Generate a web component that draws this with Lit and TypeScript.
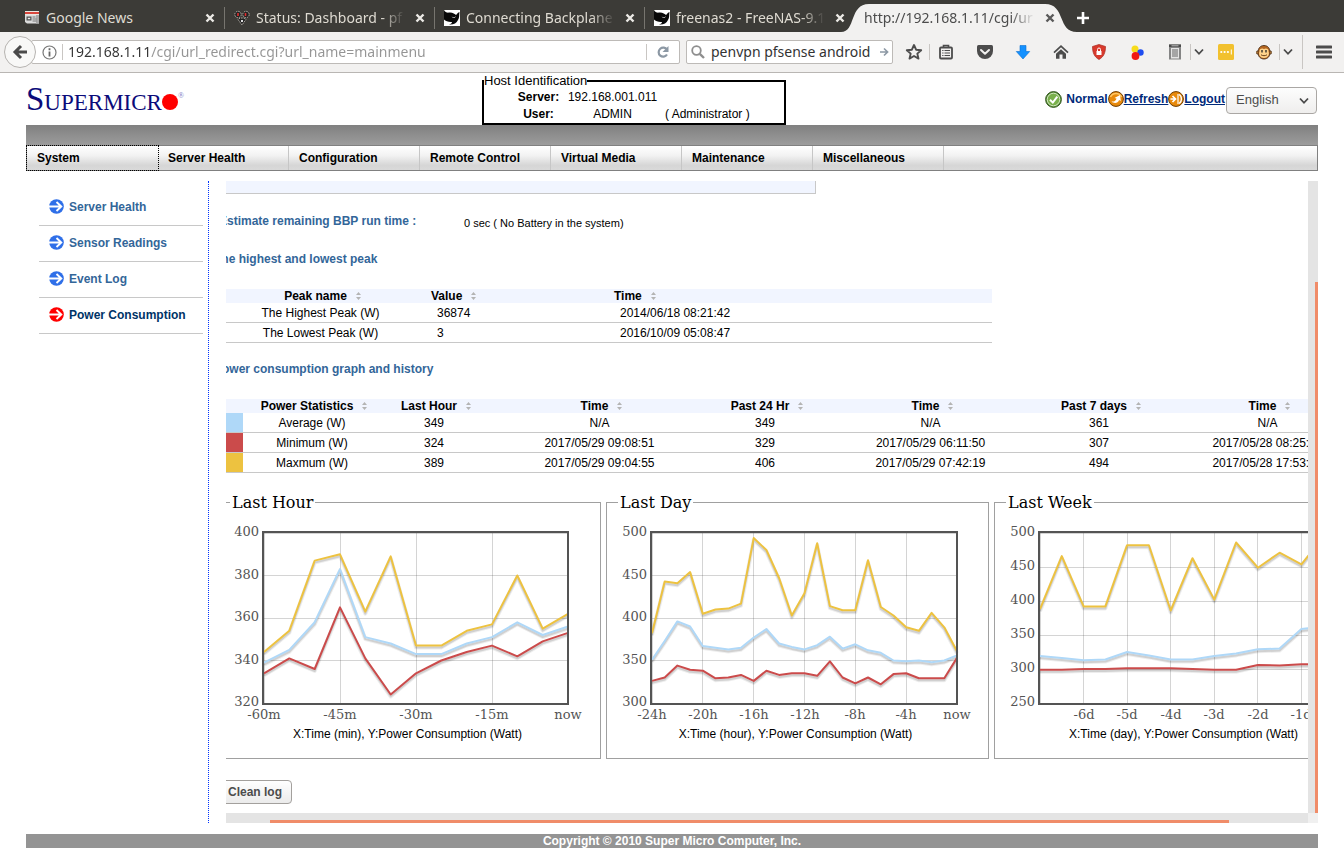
import { LitElement, html, svg, css } from "lit";
import { customElement, property, query } from "lit/decorators.js";
import { classMap } from "lit/directives/class-map.js";

const chevron = html`<svg class="icon" width="10" height="8" viewBox="0 0 10 8" aria-hidden="true">
  <path d="M1 1.500 5 5.800 9 1.500" fill="none" stroke="#4a4a4a" stroke-width="1.800" />
</svg>`;

const closeIcon = (color: string) => html`<svg class="icon" width="10" height="10" viewBox="0 0 10 10" aria-hidden="true">
  <path d="M1.5 1.5 8.5 8.5M8.5 1.5 1.5 8.5" fill="none" stroke=${color} stroke-width="2.4" />
</svg>`;

const newsIcon = html`<svg class="icon" width="16" height="16" viewBox="0 0 16 16" aria-hidden="true">
  <path d="M1 1h14v4H1z" fill="#e8e6e2" />
  <path d="M1 2h14v2H1z" fill="#d8463c" />
  <path d="M1 5h14v8.500H3L1 12z" fill="#dcdcdc" />
  <path d="M12 5h3v8.500h-3z" fill="#a9a9a9" />
  <path d="M2.500 6.500h5v4h-5z" fill="#555" />
  <path d="M3.800 7.800h2.400v1.400H3.800z" fill="#eee" />
  <path d="M8.500 7h3M8.500 9h4M8.500 11h4" stroke="#777" />
</svg>`;

const pfIcon = html`<svg class="icon" width="16" height="16" viewBox="0 0 16 16" aria-hidden="true">
  <circle cx="4" cy="4.5" r="3.2" fill="#222" stroke="#b9b4ac" stroke-dasharray="1.5 1" />
  <circle cx="12" cy="4.5" r="3.2" fill="#222" stroke="#b9b4ac" stroke-dasharray="1.5 1" />
  <path d="M4 9.5 8 15l4-5.5-2-1.5H6z" fill="#222" stroke="#b9b4ac" stroke-dasharray="1.5 1" />
  <path d="M4 3v3M11.5 3v3" stroke="#e03030" stroke-width="1.6" />
  <path d="M7 10h2v2H7z" fill="#ddd" />
</svg>`;

const orcaIcon = html`<svg class="icon" width="16" height="16" viewBox="0 0 16 16" aria-hidden="true">
  <path d="M0 0h16v16H0z" fill="#fff" />
  <path d="M0 0c1 2 3 3 5 2.6C8 2 11 4 12 5c1-1 2-2.500 3.500-3C15 5 15.500 8 14 10c-1.500 3.500-5 5-9 4.500C7 14 8 13 8 12 5 12.500 1.500 11 0 9.500z" fill="#080808" />
  <path d="M7.500 6.500c1.500 1 3 1 4.500-.3-.5 1.600-3 2.300-4.500.3z" fill="#fff" />
</svg>`;

const toolIcons = {
  star: html`<svg class="icon" width="18" height="18" viewBox="0 0 18 18"><path d="M9 2l2.100 4.700 5.100.5-3.900 3.400 1.200 5L9 13l-4.500 2.600 1.200-5L1.800 7.200l5.100-.5z" fill="none" stroke="#4c4c4c" stroke-width="1.900" stroke-linejoin="round" /></svg>`,
  list: html`<svg class="icon" width="16" height="16" viewBox="0 0 16 16"><path d="M5.500 3V1.500h5V3" fill="none" stroke="#4c4c4c" stroke-width="1.600" /><rect x="2" y="3.500" width="12" height="11" rx="1" fill="none" stroke="#4c4c4c" stroke-width="1.800" /><path d="M4.200 6.500h1.300M6.500 6.500H12M4.200 9h1.300M6.500 9H12M4.200 11.500h1.300M6.500 11.500H12" stroke="#4c4c4c" stroke-width="1.100" /></svg>`,
  pocket: html`<svg class="icon" width="18" height="16" viewBox="0 0 18 16"><path d="M1 2.500Q1 1 2.500 1h13Q17 1 17 2.500V7a8 8 0 0 1-16 0z" fill="#4c4c4c" /><path d="M5 6l4 3.800L13 6" fill="none" stroke="#f2f1f0" stroke-width="2" stroke-linecap="round" stroke-linejoin="round" /></svg>`,
  download: html`<svg class="icon" width="16" height="16" viewBox="0 0 16 16"><path d="M5 1.500h6v6h3.700L8 15 1.300 7.500H5z" fill="#1491ff" stroke="#0a6fd0" stroke-width=".6" /></svg>`,
  home: html`<svg class="icon" width="16" height="16" viewBox="0 0 16 16"><path d="M1 8.700 8 2.200l7 6.500" fill="none" stroke="#4c4c4c" stroke-width="1.700" /><path d="M3 9.800l5-4.600 5 4.600v5H9.500V10.500h-3v4.300H3z" fill="#4c4c4c" /></svg>`,
  shield: html`<svg class="icon" width="16" height="16" viewBox="0 0 16 16"><path d="M8 .5 14.500 2.500C14.500 9 12.500 13 8 15.500 3.500 13 1.500 9 1.500 2.500z" fill="#d93a2d" stroke="#a82a20" stroke-width=".7" /><path d="M5.500 7h5v4h-5z" fill="#fff" /><path d="M6.500 7V5.500a1.500 1.500 0 0 1 3 0V7" fill="none" stroke="#fff" /></svg>`,
  dots: html`<svg class="icon" width="16" height="16" viewBox="0 0 16 16"><circle cx="6" cy="5" r="3.500" fill="#f7dc1b" /><circle cx="11.500" cy="8.500" r="3.200" fill="#1f4df0" /><circle cx="6.500" cy="12" r="3.900" fill="#f01a12" /></svg>`,
  clip: html`<svg class="icon" width="14" height="16" viewBox="0 0 14 16"><path d="M1 .500h12V15.500H1z" fill="#858585" /><path d="M3 4h8v10.500H3z" fill="#e4e4e4" /><path d="M1 .500h12V3H1z" fill="#4a4a4a" /><path d="M3.500 1.800h7" stroke="#ddd" stroke-width=".8" /><path d="M4 6h6M4 8h6M4 10h6M4 12h6" stroke="#666" /></svg>`,
  pass: html`<svg class="icon" width="16" height="16" viewBox="0 0 16 16"><rect width="16" height="16" rx="1.500" fill="#f2c12e" /><circle cx="3.300" cy="8" r="1.100" fill="#fff" /><circle cx="6.600" cy="8" r="1.100" fill="#fff" /><circle cx="9.900" cy="8" r="1.100" fill="#fff" /><path d="M13.300 5.500v5" stroke="#fff" /></svg>`,
  monkey: html`<svg class="icon" width="16" height="16" viewBox="0 0 16 16"><circle cx="2" cy="8.500" r="1.700" fill="#e09a4c" stroke="#3b2410" stroke-width=".7" /><circle cx="14" cy="8.500" r="1.700" fill="#e09a4c" stroke="#3b2410" stroke-width=".7" /><path d="M8 1.500c4 0 6 3 6 7s-2.500 6.500-6 6.500-6-2.500-6-6.500 2-7 6-7z" fill="#b4651f" stroke="#3b2410" stroke-width=".8" /><path d="M8 5c2-1.500 5 0 4.500 2.500 1.500 3.500-1 6.500-4.500 6.500S2 11 3.500 7.500C3 5 6 3.500 8 5z" fill="#ffd48c" /><path d="M6 6v2.500M10 6v2.500" stroke="#222" stroke-width="1.300" /><path d="M5 10.800c2 1.200 4 1.200 6 0" fill="none" stroke="#5a3010" stroke-width=".9" /></svg>`,
  menu: html`<svg class="icon" width="16" height="14" viewBox="0 0 16 14"><path d="M1 2h14M1 7h14M1 12h14" stroke="#4c4c4c" stroke-width="3" stroke-linecap="round" /></svg>`,
};

@customElement("browser-chrome")
export class BrowserChrome extends LitElement {
  static styles = css`
    :host {
      display: block;
      font: 14px/20px "Noto Sans", "Open Sans", sans-serif;
      color: #4c4c4c;
    }
    .icon { display: block; flex: none; }
    button { font: inherit; color: inherit; background: none; border: 0; padding: 0; }
    .tabs {
      display: flex;
      height: 32px;
      box-sizing: border-box;
      padding: 4px 0 0 15px;
      background: #3c3b37;
      color: #dfdbd2;
    }
    .tab {
      flex: 0 1 210px;
      min-width: 0;
      box-sizing: border-box;
      display: flex;
      align-items: center;
      gap: 6px;
      padding: 0 10px 0 9px;
      position: relative;
    }
    .tab.split { background: linear-gradient(#77756f, #77756f) right 3px / 1px 22px no-repeat; }
    .tab.active { color: #4c4c4c; z-index: 1; }
    .shape { position: absolute; left: -14px; top: 0; width: calc(100% + 28px); height: 28px; }
    .title {
      flex: 1;
      min-width: 0;
      overflow: hidden;
      white-space: nowrap;
      position: relative;
    }
    .fade { mask-image: linear-gradient(90deg, #000 calc(100% - 28px), transparent calc(100% - 4px)); }
    .close { position: relative; }
    .new { padding: 0 11px; }
    .bar {
      display: flex;
      align-items: center;
      height: 40px;
      padding-left: 4px;
      background: #f2f1f0;
      border-bottom: 1px solid #b9b6b3;
    }
    .back {
      flex: none;
      width: 32px;
      height: 32px;
      box-sizing: border-box;
      border: 1px solid #b6b3b0;
      border-radius: 50%;
      background: #f8f8f7;
      display: grid;
      place-items: center;
      z-index: 1;
    }
    .field {
      display: flex;
      align-items: center;
      box-sizing: border-box;
      height: 24px;
      background: #fff;
      border: 1px solid #bdbab7;
      border-radius: 2px;
    }
    .address { flex: 1; min-width: 0; margin-left: -5px; padding-left: 10px; }
    .search { flex: 0 1 207px; min-width: 0; margin-left: 6px; padding: 0 3px 0 4px; }
    .field input {
      flex: 1;
      min-width: 0;
      width: 0;
      height: 20px;
      font: inherit;
      color: #333;
      border: 0;
      padding: 0;
      outline: 0;
      background: none;
    }
    .field .url {
      margin-left: 5px;
      -webkit-text-fill-color: transparent;
      background: linear-gradient(90deg, #333 83px, #959595 83px);
      -webkit-background-clip: text;
      background-clip: text;
    }
    .search input { margin-left: 6px; }
    .rule { flex: none; width: 1px; height: 16px; background: #c9c6c3; }
    .info { margin-right: 5px; }
    .reload { width: 32px; display: grid; place-items: center; }
    .tool { flex: none; width: 38px; height: 32px; display: grid; place-items: center; }
    .tool.narrow { width: 31px; }
    .tool.paired { width: 34px; padding-left: 4px; }
    .tool.drop { width: 16px; }
    .tool.last { width: 41px; }
    .gap { margin-left: 5px; }
    .tall { height: 34px; margin-left: 6px; }
  `;

  private tabs = [
    { title: "Google News", icon: newsIcon, split: true, fade: false },
    { title: "Status: Dashboard - pf", icon: pfIcon, split: true, fade: true },
    { title: "Connecting Backplane", icon: orcaIcon, split: true, fade: true },
    { title: "freenas2 - FreeNAS-9.1", icon: orcaIcon, split: false, fade: true },
  ];

  private tool(name: keyof typeof toolIcons, label: string, extra = "") {
    return html`<button class="tool ${extra}" aria-label=${label}>${toolIcons[name]}</button>`;
  }

  render() {
    return html`
      <div class="tabs">
        ${this.tabs.map(
          (t) => html`<div class=${classMap({ tab: true, split: t.split })}>
            ${t.icon}<span class=${classMap({ title: true, fade: t.fade })}>${t.title}</span>
            <button class="close" aria-label="Close tab">${closeIcon("#eceae6")}</button>
          </div>`,
        )}
        <div class="tab active">
          <svg class="shape" viewBox="0 0 238 28" preserveAspectRatio="none" aria-hidden="true">
            <path d="M0 28C15 28 8 0 28 0H204C225 0 216 28 236 28z" fill="#f2f1f0" />
          </svg>
          <span class="title fade">http://192.168.1.11/cgi/ur</span>
          <button class="close" aria-label="Close tab">${closeIcon("#5a5a5a")}</button>
        </div>
        <button class="new" aria-label="New tab">
          <svg class="icon" width="14" height="14" viewBox="0 0 14 14"><path d="M7 1v12M1 7h12" stroke="#fff" stroke-width="2.600" /></svg>
        </button>
      </div>
      <div class="bar">
        <button class="back" aria-label="Back">
          <svg class="icon" width="16" height="16" viewBox="0 0 16 16"><path d="M9 2 3 8l6 6M3 8h12" fill="none" stroke="#4a4a4a" stroke-width="3" /></svg>
        </button>
        <div class="field address">
          <svg class="icon info" width="15" height="15" viewBox="0 0 15 15" aria-hidden="true"><circle cx="7.500" cy="7.500" r="6.500" fill="none" stroke="#777" stroke-width="1.200" /><path d="M7.500 6.500v5M7.500 3.300v2" stroke="#666" stroke-width="1.800" /></svg>
          <span class="rule"></span>
          <input class="url" aria-label="Address" value="192.168.1.11/cgi/url_redirect.cgi?url_name=mainmenu" />
          <span class="rule"></span>
          <button class="reload" aria-label="Reload">
            <svg class="icon" width="14" height="14" viewBox="0 0 14 14"><path d="M11 4.800A4.500 4.500 0 1 0 11 9.500" fill="none" stroke="#8c98a4" stroke-width="2.200" /><path d="M12.500 1v6h-6z" fill="#8c98a4" /></svg>
          </button>
        </div>
        <div class="field search">
          <svg class="icon" width="14" height="14" viewBox="0 0 14 14" aria-hidden="true"><circle cx="5.500" cy="5.500" r="4.300" fill="none" stroke="#8e8e8e" stroke-width="1.800" /><path d="M8.800 8.800 13 13" stroke="#8e8e8e" stroke-width="2.400" /></svg>
          <input aria-label="Search" value="penvpn pfsense android" />
          <svg class="icon" width="9" height="10" viewBox="0 0 9 10" aria-hidden="true"><path d="M0 5h7.500M4 1.500 7.600 5 4 8.500" fill="none" stroke="#8c98a4" stroke-width="1.600" /></svg>
        </div>
        ${this.tool("star", "Bookmark", "narrow gap")}<span class="rule"></span>
        ${this.tool("list", "Bookmarks list", "narrow")}
        ${this.tool("pocket", "Pocket", "gap")}
        ${this.tool("download", "Downloads")}
        ${this.tool("home", "Home")}
        ${this.tool("shield", "Blocker")}
        ${this.tool("dots", "Colour dots")}
        ${this.tool("clip", "Clipboard", "paired")}<span class="rule"></span>
        <button class="tool drop" aria-label="Clipboard options">${chevron}</button>
        ${this.tool("pass", "Passwords")}
        ${this.tool("monkey", "Scripts", "paired")}<span class="rule"></span>
        <button class="tool drop" aria-label="Script options">${chevron}</button>
        <span class="rule tall"></span>
        ${this.tool("menu", "Menu", "last")}
      </div>
    `;
  }
}

type Series = { kind: string; values: number[] };

@customElement("power-chart")
export class PowerChart extends LitElement {
  static styles = css`
    :host { display: block; flex: none; width: 383px; }
    .frame {
      box-sizing: border-box;
      height: 266px;
      margin: 0;
      padding: 9px 12px 0 8px;
      border: 1px solid #a0a0a0;
      min-width: 0;
    }
    .legend { margin-left: 3px; padding: 0 2px; font: 16px/19px "DejaVu Serif", serif; color: #000; }
    .plot { display: block; overflow: visible; }
    .caption { margin: 1px 0 0; font: 12px/16px "Liberation Sans", Arial, sans-serif; text-align: center; }
    .tick { font: 13px "DejaVu Serif", serif; fill: #545454; }
    .end { text-anchor: end; }
    .middle { text-anchor: middle; }
    .grid { stroke: #545454; stroke-opacity: 0.25; }
    .box { fill: none; stroke: #545454; stroke-width: 2; }
    .line { fill: none; stroke-width: 2; stroke-linejoin: round; }
    .avg { stroke: #afd8f8; }
    .min { stroke: #cb4b4b; }
    .max { stroke: #edc240; }
    .shadow { fill: none; stroke: #000; stroke-opacity: 0.12; stroke-width: 2; stroke-linejoin: round; }
    .soft { stroke-opacity: 0.07; stroke-width: 4; }
  `;

  @property() heading = "";
  @property() caption = "";
  @property({ attribute: false }) low = 0;
  @property({ attribute: false }) high = 0;
  @property({ attribute: false }) step = 1;
  @property({ attribute: false }) right = 341;
  @property({ attribute: false }) labels: string[] = [];
  @property({ attribute: false }) series: Series[] = [];

  private x0 = 37;
  private y0 = 12;
  private y1 = 182;

  private y(v: number) {
    return this.y1 - ((v - this.low) / (this.high - this.low)) * (this.y1 - this.y0);
  }

  private points(values: number[], dy: number) {
    const dx = (this.right - this.x0) / (values.length - 1);
    return values.map((v, i) => `${(this.x0 + i * dx).toFixed(1)},${(this.y(v) + dy).toFixed(1)}`).join(" ");
  }

  render() {
    const rows: number[] = [];
    for (let v = this.low; v <= this.high; v += this.step) rows.push(v);
    const gap = (this.right - this.x0) / (this.labels.length - 1);
    const line = (v: number) => Math.floor(v) + 0.5;
    return html`<fieldset class="frame">
      <legend class="legend">${this.heading}</legend>
      <svg class="plot" width="361" height="204" viewBox="0 0 361 204" role="img" aria-label=${this.heading}>
        ${rows.map(
          (v) => svg`<line class="grid" x1=${this.x0} x2=${this.right} y1=${line(this.y(v))} y2=${line(this.y(v))} />
            <text class="tick end" x="32" y=${Math.round(this.y(v)) + 3}>${v}</text>`,
        )}
        ${this.labels.map((t, i) => {
          const x = this.x0 + i * gap;
          return svg`<line class="grid" x1=${line(x)} x2=${line(x)} y1=${this.y0} y2=${this.y1} />
            <text class="tick middle" x=${Math.round(x)} y="198">${t}</text>`;
        })}
        ${this.series.map(
          (s) => svg`<polyline class="shadow soft" points=${this.points(s.values, 2)} />
            <polyline class="shadow" points=${this.points(s.values, 2)} />
            <polyline class="line ${s.kind}" points=${this.points(s.values, 0)} />`,
        )}
        <rect class="box" x="36" y="11" width=${this.right - 36} height="172" />
      </svg>
      <p class="caption">${this.caption}</p>
    </fieldset>`;
  }
}

const sorter = html`<svg class="sort" width="5" height="8" viewBox="0 0 5 8" aria-hidden="true">
  <path d="M0 3h5L2.500 0zM0 5h5L2.500 8z" fill="#b4b4b4" />
</svg>`;

@customElement("power-report")
export class PowerReport extends LitElement {
  static styles = css`
    :host {
      flex: 1;
      min-width: 0;
      display: grid;
      grid-template: minmax(0, 1fr) 10px / minmax(0, 1fr) 10px;
      font: 12px/14px "Liberation Sans", Arial, sans-serif;
      color: #000;
    }
    .view { overflow: hidden; }
    .content { width: max-content; padding: 0 20px 0 42px; }
    .strip {
      width: 597px;
      height: 12px;
      background: #f1f5ff;
      border: solid #c8c8c8;
      border-width: 0 1px 1px 0;
    }
    .title { margin: 0; font-size: 12px; line-height: 14px; color: #336699; }
    .runtime { display: flex; align-items: center; height: 16px; margin-top: 20px; }
    .runtime .title { width: 245px; padding: 0 0 2px 1px; }
    .runtime .value { font-size: 11px; margin-top: 2px; }
    .section { margin-left: -4px; }
    .peaks-title { margin-top: 22px; }
    .history-title { margin-top: 19px; }
    .data { table-layout: fixed; border-collapse: collapse; margin-top: 23px; }
    .data th { height: 14px; padding: 0 0 0 4px; background: #f1f5ff; white-space: nowrap; }
    .data td { height: 19px; padding: 0; border-bottom: 1px solid #c8c8c8; text-align: center; white-space: nowrap; }
    .sort { margin-left: 9px; }
    .peaks { width: 774px; }
    .data .lead { text-align: left; padding-left: 8px; }
    .data .text { text-align: left; padding-left: 14px; }
    .stats { width: 1162px; }
    .c25 { width: 25px; }
    .c105 { width: 106px; }
    .c138 { width: 138px; }
    .c183 { width: 183px; }
    .c205 { width: 205px; }
    .c225 { width: 225px; }
    .c112 { width: 112px; }
    .avg { background: #afd8f8; }
    .min { background: #cb4b4b; }
    .max { background: #edc240; }
    .charts { display: flex; gap: 5px; margin-top: 20px; }
    .clean {
      display: block;
      height: 24px;
      margin-top: 21px;
      padding: 0 9px;
      font: bold 12px/14px "Liberation Sans", Arial, sans-serif;
      color: #4c4c4c;
      background: linear-gradient(#fff, #ebebeb);
      border: 1px solid #a3a09d;
      border-radius: 4px;
    }
    .track { background: #e4e4e4; display: flex; }
    .down { flex-direction: column; align-items: flex-end; }
    .across { align-items: flex-end; }
    .thumb { background: #f08c69; }
    .down .thumb { width: 3px; height: 84%; margin-top: auto; }
    .across .thumb { height: 3px; width: 88.6%; margin-left: 44px; }
    .corner { background: #f0f0f0; }
  `;

  @query(".view") view!: HTMLElement;

  firstUpdated() {
    this.view.scrollLeft = 50;
  }

  private stats = [
    ["avg", "Average (W)", "349", "N/A", "349", "N/A", "361", "N/A"],
    ["min", "Minimum (W)", "324", "2017/05/29 09:08:51", "329", "2017/05/29 06:11:50", "307", "2017/05/28 08:25:31"],
    ["max", "Maxmum (W)", "389", "2017/05/29 09:04:55", "406", "2017/05/29 07:42:19", "494", "2017/05/28 17:53:31"],
  ];

  private charts = [
    {
      heading: "Last Hour",
      caption: "X:Time (min), Y:Power Consumption (Watt)",
      low: 320, high: 400, step: 20, right: 341,
      labels: ["-60m", "-45m", "-30m", "-15m", "now"],
      series: [
        { kind: "avg", values: [339, 345, 358, 383, 351, 348, 343, 343, 348, 351, 358, 352, 356] },
        { kind: "min", values: [334, 341, 336, 365, 341, 324, 334, 340, 344, 347, 342, 349, 353] },
        { kind: "max", values: [344, 354, 387, 390, 363, 389, 347, 347, 354, 357, 380, 355, 362] },
      ],
    },
    {
      heading: "Last Day",
      caption: "X:Time (hour), Y:Power Consumption (Watt)",
      low: 300, high: 500, step: 50, right: 342,
      labels: ["-24h", "-20h", "-16h", "-12h", "-8h", "-4h", "now"],
      series: [
        { kind: "avg", values: [351, 373, 396, 390, 367, 365, 363, 365, 377, 387, 370, 366, 363, 368, 378, 364, 369, 362, 359, 350, 349, 350, 348, 350, 356] },
        { kind: "min", values: [326, 330, 344, 339, 338, 329, 330, 333, 326, 338, 333, 335, 335, 332, 349, 330, 323, 330, 322, 334, 335, 329, 329, 329, 353] },
        { kind: "max", values: [382, 443, 441, 454, 405, 410, 411, 417, 494, 480, 447, 403, 429, 488, 414, 409, 409, 468, 413, 403, 389, 385, 406, 389, 361] },
      ],
    },
    {
      heading: "Last Week",
      caption: "X:Time (day), Y:Power Consumption (Watt)",
      low: 250, high: 500, step: 50, right: 342,
      labels: ["", "-6d", "-5d", "-4d", "-3d", "-2d", "-1d", "now"],
      series: [
        { kind: "avg", values: [319, 316, 313, 314, 325, 320, 314, 314, 319, 323, 329, 330, 359, 362, 356] },
        { kind: "min", values: [299, 299, 300, 300, 301, 301, 301, 300, 299, 299, 306, 305, 307, 307, 353] },
        { kind: "max", values: [388, 466, 392, 392, 482, 482, 386, 463, 402, 486, 449, 471, 454, 494, 362] },
      ],
    },
  ];

  render() {
    return html`
      <div class="view">
        <div class="content">
          <div class="strip"></div>
          <div class="runtime">
            <h2 class="title">Estimate remaining BBP run time :</h2>
            <span class="value">0 sec ( No Battery in the system)</span>
          </div>
          <h2 class="title section peaks-title">The highest and lowest peak</h2>
          <table class="data peaks">
            <colgroup><col class="c205" /><col class="c183" /><col /></colgroup>
            <thead>
              <tr><th>Peak name${sorter}</th><th class="lead">Value${sorter}</th><th class="lead">Time${sorter}</th></tr>
            </thead>
            <tbody>
              <tr><td>The Highest Peak (W)</td><td class="text">36874</td><td class="text">2014/06/18 08:21:42</td></tr>
              <tr><td>The Lowest Peak (W)</td><td class="text">3</td><td class="text">2016/10/09 05:08:47</td></tr>
            </tbody>
          </table>
          <h2 class="title section history-title">Power consumption graph and history</h2>
          <table class="data stats">
            <colgroup>
              <col class="c25" /><col class="c138" /><col class="c105" /><col class="c225" />
              <col class="c105" /><col class="c225" /><col class="c112" /><col />
            </colgroup>
            <thead>
              <tr>
                <th></th>
                ${["Power Statistics", "Last Hour", "Time", "Past 24 Hr", "Time", "Past 7 days", "Time"].map(
                  (t) => html`<th>${t}${sorter}</th>`,
                )}
              </tr>
            </thead>
            <tbody>
              ${this.stats.map(
                ([kind, ...cells]) => html`<tr><td class=${kind}></td>${cells.map((c) => html`<td>${c}</td>`)}</tr>`,
              )}
            </tbody>
          </table>
          <div class="charts">
            ${this.charts.map(
              (c) => html`<power-chart
                .heading=${c.heading}
                .caption=${c.caption}
                .low=${c.low}
                .high=${c.high}
                .step=${c.step}
                .right=${c.right}
                .labels=${c.labels}
                .series=${c.series}
              ></power-chart>`,
            )}
          </div>
          <button class="clean">Clean log</button>
        </div>
      </div>
      <div class="track down"><div class="thumb"></div></div>
      <div class="track across"><div class="thumb"></div></div>
      <div class="corner"></div>
    `;
  }
}

@customElement("app-root")
export class AppRoot extends LitElement {
  static styles = css`
    :host {
      display: flex;
      flex-direction: column;
      height: 100vh;
      background: #fff;
      font: 12px/14px "Liberation Sans", Arial, sans-serif;
      color: #000;
    }
    .icon { display: block; flex: none; }
    .page { flex: 1; min-height: 0; display: flex; flex-direction: column; padding: 0 26px; }
    .top { display: grid; grid-template: 52px / 6fr 304px 7fr; }
    .logo { display: flex; align-items: baseline; color: #0b0b7a; font: 23px/52px "Liberation Serif", serif; }
    .big { font-size: 33px; }
    .dot { align-self: center; margin-top: 6px; }
    .reg { font-size: 8px; line-height: 9px; align-self: flex-start; margin-top: 18px; color: #7a7ac4; }
    .host {
      box-sizing: border-box;
      height: 52px;
      margin: 0;
      padding: 1px 0 0 33px;
      border: 2px solid #000;
      min-width: 0;
    }
    .host .caption { margin-left: -33px; padding: 0; font-size: 13px; line-height: 16px; }
    .identity { display: grid; grid-template-columns: 43px 93px auto; column-gap: 6px; row-gap: 3px; justify-content: start; text-align: center; }
    .identity > * { margin: 0; white-space: nowrap; }
    .status { display: flex; align-items: center; justify-content: flex-end; font-weight: bold; color: #002a7a; }
    .status a { display: flex; align-items: center; color: inherit; text-decoration: underline; }
    .ok { margin-right: 4px; }
    .lang { position: relative; margin: 2px 1px 0 1px; }
    .lang select {
      appearance: none;
      display: block;
      width: 91px;
      height: 27px;
      padding: 0 9px;
      font: 13px/16px "Liberation Sans", Arial, sans-serif;
      color: #4c4c4c;
      background: linear-gradient(#fdfdfd, #efeeed);
      border: 1px solid #aaa7a4;
      border-radius: 4px;
    }
    .lang .icon { position: absolute; right: 8px; top: 10px; pointer-events: none; }
    .band { height: 20px; background: linear-gradient(#808080, #9c9c9c); }
    .menu {
      display: flex;
      box-sizing: border-box;
      height: 26px;
      border: 1px solid #808080;
      background: linear-gradient(#fff, #f2f2f2 40%, #d6d6d6 80%, #d9d9d9);
    }
    .menu a {
      flex: 0 1 131px;
      box-sizing: border-box;
      padding-left: 10px;
      font-weight: bold;
      line-height: 24px;
      color: #000;
      text-decoration: none;
      border-right: 1px solid #c6c6c6;
      white-space: nowrap;
    }
    .menu .focus { outline: 1px dotted #000; border-right-color: transparent; }
    .main { flex: 1; min-height: 0; display: flex; gap: 17px; margin: 10px 0 11px; }
    .side { flex: none; box-sizing: border-box; width: 183px; padding: 9px 5px 0 13px; border-right: 1px dotted #0033ff; }
    .side a {
      display: flex;
      align-items: center;
      gap: 5px;
      height: 33px;
      padding: 0 0 2px 10px;
      border-bottom: 1px solid #c8c8c8;
      font-weight: bold;
      color: #336699;
      text-decoration: none;
    }
    .side .current { color: #003366; }
    .foot { height: 14px; background: #949494; color: #fff; font-weight: bold; text-align: center; }
  `;

  private sections = ["System", "Server Health", "Configuration", "Remote Control", "Virtual Media", "Maintenance", "Miscellaneous"];
  private links = ["Server Health", "Sensor Readings", "Event Log", "Power Consumption"];

  private arrow(color: string) {
    return html`<svg class="icon" width="15" height="15" viewBox="0 0 15 15" aria-hidden="true">
      <circle cx="7.500" cy="7.500" r="7.300" fill=${color} />
      <path d="M0 7.500h12M7.500 3l4.800 4.500L7.500 12" fill="none" stroke="#fff" stroke-width="1.900" />
    </svg>`;
  }

  render() {
    return html`
      <browser-chrome></browser-chrome>
      <div class="page">
        <header class="top">
          <div class="logo">
            <span class="big">S</span><span>UPERMICR</span>
            <svg class="icon dot" width="16" height="16" viewBox="0 0 16 16" aria-hidden="true"><circle cx="8" cy="8" r="8" fill="#ff0000" /></svg>
            <span class="reg">®</span>
          </div>
          <fieldset class="host">
            <legend class="caption">Host Identification</legend>
            <div class="identity">
              <b>Server:</b><span>192.168.001.011</span><span></span>
              <b>User:</b><span>ADMIN</span><span>( Administrator )</span>
            </div>
          </fieldset>
          <div class="status">
            <svg class="icon ok" width="17" height="17" viewBox="0 0 17 17" aria-hidden="true">
              <circle cx="8.500" cy="8.500" r="7.900" fill="#4f8a2c" stroke="#3c5b2a" />
              <circle cx="8.500" cy="8.500" r="6.300" fill="#79b04c" stroke="#d6e8c4" />
              <path d="M5 8.800 7.800 11.600 12.300 5.600" fill="none" stroke="#fff" stroke-width="2" />
            </svg>
            <span>Normal</span>
            <a href="#refresh">
              <svg class="icon" width="16" height="16" viewBox="0 0 16 16" aria-hidden="true">
                <circle cx="8" cy="8" r="7.400" fill="#e88a0c" stroke="#6e3c00" />
                <path d="M2.500 6a6 6 0 0 1 11 0" fill="none" stroke="#ffc766" stroke-width="1.500" />
                <path d="M3.500 10.500c2.500.5 4.500-.7 5-3L6.500 7l5.500-3 .8 6-1.700-1c-1 3-4.600 4-7.600 1.500z" fill="#fff" />
              </svg>Refresh</a>
            <a href="#logout">
              <svg class="icon" width="16" height="16" viewBox="0 0 16 16" aria-hidden="true">
                <circle cx="8" cy="8" r="7.400" fill="#e88a0c" stroke="#6e3c00" />
                <path d="M2.500 8H8M4.500 5l3 3-3 3" fill="none" stroke="#fff" stroke-width="1.700" />
                <path d="M11 3.500c3.200 1.500 3.200 7.500 0 9" fill="none" stroke="#fff" stroke-width="1.300" />
                <path d="M10 3v10" stroke="#fff" stroke-width="1.200" />
              </svg>Logout</a>
            <div class="lang">
              <select aria-label="Language"><option>English</option></select>${chevron}
            </div>
          </div>
        </header>
        <div class="band"></div>
        <nav class="menu">
          ${this.sections.map((s, i) => html`<a href="#" class=${classMap({ focus: i === 0 })}>${s}</a>`)}
        </nav>
        <main class="main">
          <nav class="side">
            ${this.links.map((l, i) => {
              const current = i === 3;
              return html`<a href="#" class=${classMap({ current })}>${this.arrow(current ? "#ff0000" : "#2f6fe8")}${l}</a>`;
            })}
          </nav>
          <power-report></power-report>
        </main>
        <footer class="foot">Copyright © 2010 Super Micro Computer, Inc.</footer>
      </div>
    `;
  }
}
